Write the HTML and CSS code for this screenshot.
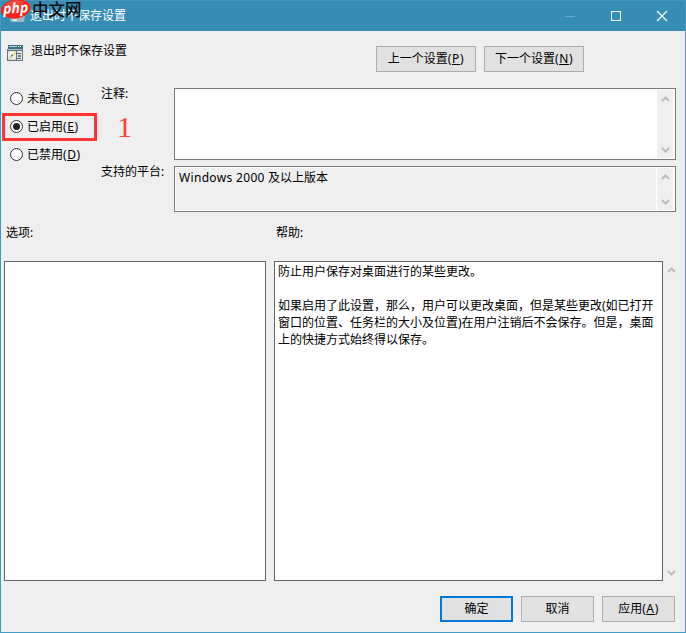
FILE: index.html
```html
<!DOCTYPE html>
<html lang="zh-CN">
<head>
<meta charset="utf-8">
<title>退出时不保存设置</title>
<link rel="stylesheet" href="styles.css">
</head>
<body>
<div class="window">
  <header class="titlebar">
    <span class="caption">退出时不保存设置</span>
    <div class="controls">
      <svg width="12" height="12" viewBox="0 0 12 12"><path d="M1 6.5h10" stroke="#64a9ca"/></svg>
      <svg width="12" height="12" viewBox="0 0 12 12"><path d="M1.5 1.5h9v9h-9z" fill="none" stroke="#fff"/></svg>
      <svg width="12" height="12" viewBox="0 0 12 12"><path d="M1 1l10 10M11 1L1 11" stroke="#fff" stroke-width="1.2"/></svg>
    </div>
    <div class="brand">
      <svg class="brand-oval" width="34" height="23" viewBox="0 0 34 23">
        <path d="M8 16l8-1 8 1-1 6H10z" fill="#9bb8c6"/>
        <path d="M11 18h5v3h-4z" fill="#dde8ec"/>
        <ellipse cx="14.6" cy="9" rx="14.8" ry="9.6" fill="#f8211b" transform="rotate(-9 14.6 9)"/>
        <ellipse cx="13.5" cy="4" rx="9.5" ry="3.5" fill="#ff6254" opacity=".55" transform="rotate(-9 13.5 4)"/>
      </svg>
      <span class="brand-php">php</span>
      <span class="brand-name">中文网</span>
    </div>
  </header>

  <section class="heading">
    <svg class="policy-icon" width="16" height="16" viewBox="0 0 16 16">
      <path d="M1 0h15v5H1z" fill="#3d7183"/><path d="M2 1h8v1H2z" fill="#b5d2d6"/><path d="M11 1h1v1h-1zM13 1h1v1h-1z" fill="#fff"/>
      <path d="M0 4h16v12H0z" fill="#66747b"/><path d="M1 4h14v1H1z" fill="#b4bec1"/><path d="M1 6h8v9H1z" fill="#d4dccb"/>
      <circle cx="5" cy="10.5" r="3.9" fill="#f5f5e5"/><path d="M5 10l3-3 .7 3z" fill="#e7d776"/><path d="M2 12l3-1-1 3z" fill="#9ccabb"/><circle cx="5" cy="10.5" r="1" fill="#576d73"/>
      <path d="M10 6h5v9h-5z" fill="#e4e6e6"/><path d="M10 8.5h4M10 13.5h4" stroke="#426f85"/><path d="M11 10h3v2h-3z" fill="#777"/>
    </svg>
    <span class="policy-name">退出时不保存设置</span>
    <div class="nav">
      <button class="btn wide">上一个设置<span class="key">(<u>P</u>)</span></button>
      <button class="btn wide">下一个设置<span class="key">(<u>N</u>)</span></button>
    </div>
  </section>

  <section class="settings">
    <div class="radios">
      <label class="radio"><i class="dot"></i>未配置<span class="key">(<u>C</u>)</span></label>
      <label class="radio marked"><i class="dot on"></i>已启用<span class="key">(<u>E</u>)</span></label>
      <label class="radio"><i class="dot"></i>已禁用<span class="key">(<u>D</u>)</span></label>
    </div>
    <div class="labels">
      <span class="comment-label">注释:</span>
      <span class="step">1</span>
      <span class="platform-label">支持的平台:</span>
    </div>
    <div class="fields">
      <div class="field comment">
        <div class="text"></div>
        <div class="scroll">
          <svg width="9" height="6" viewBox="0 0 9 6"><path d="M1 5l3.5-3.5L8 5" /></svg>
          <svg width="9" height="6" viewBox="0 0 9 6"><path d="M1 1l3.5 3.5L8 1" /></svg>
        </div>
      </div>
      <div class="field platform">
        <div class="text"><span class="latin">Windows 2000</span> 及以上版本</div>
        <div class="scroll">
          <svg width="9" height="6" viewBox="0 0 9 6"><path d="M1 5l3.5-3.5L8 5" /></svg>
          <svg width="9" height="6" viewBox="0 0 9 6"><path d="M1 1l3.5 3.5L8 1" /></svg>
        </div>
      </div>
    </div>
  </section>

  <section class="panels">
    <span class="panel-title">选项:</span>
    <span class="panel-title">帮助:</span>
    <span></span>
    <div class="panel"></div>
    <div class="panel help">
      <p>防止用户保存对桌面进行的某些更改。</p>
      <p>如果启用了此设置，那么，用户可以更改桌面，但是某些更改(如已打开<br>窗口的位置、任务栏的大小及位置)在用户注销后不会保存。但是，桌面<br>上的快捷方式始终得以保存。</p>
    </div>
    <div class="scroll outer">
      <svg width="9" height="6" viewBox="0 0 9 6"><path d="M1 5l3.5-3.5L8 5" /></svg>
      <svg width="9" height="6" viewBox="0 0 9 6"><path d="M1 1l3.5 3.5L8 1" /></svg>
    </div>
  </section>

  <footer class="actions">
    <button class="btn primary">确定</button>
    <button class="btn">取消</button>
    <button class="btn">应用<span class="key">(<u>A</u>)</span></button>
  </footer>
</div>
</body>
</html>
```
FILE: styles.css
```css
* { box-sizing: border-box; }
body {
  margin: 0;
  font: 12px/16px "Noto Sans", "Noto Sans CJK SC", sans-serif;
  color: #000;
}
.window {
  width: 686px;
  height: 633px;
  border: 1px solid #4299bd;
  border-top: 0;
  background: #efefef;
  overflow: hidden;
}
.titlebar {
  position: relative;
  display: flex;
  align-items: center;
  justify-content: space-between;
  height: 31px;
  margin: 0 -1px;
  padding: 0 18px 0 30px;
  background: #378eb5;
  border-top: 1px solid #4299bd;
  color: #fff;
}
.controls { display: flex; gap: 34px; }
.controls svg { display: block; }
.brand { position: absolute; left: 1px; top: -1px; width: 90px; height: 24px; }
.brand-oval { position: absolute; left: 0; top: 0; }
.brand-php {
  position: absolute;
  left: 2px;
  top: 0;
  font: italic bold 14px/16px "Open Sans", sans-serif;
  transform: rotate(-4deg);
}
.brand-name {
  position: absolute;
  left: 31px;
  top: 0;
  font: 500 16.5px/18px "Noto Sans CJK SC", sans-serif;
  color: #090d10;
  white-space: nowrap;
}
.heading {
  display: flex;
  height: 57px;
  padding: 14px 101px 0 6px;
}
.policy-icon { flex: none; }
.policy-name { margin: -2px 0 0 8px; }
.nav { display: flex; gap: 8px; margin: 1px 0 0 auto; }
.btn {
  display: block;
  width: 73px;
  height: 26px;
  padding: 0 0 1px;
  border: 1px solid #adadad;
  border-radius: 0;
  background: #e1e1e1;
  font: inherit;
  color: #000;
  white-space: nowrap;
}
.btn.wide { width: 100px; }
.btn.primary { border: 2px solid #0078d7; }
.key { letter-spacing: .6px; }
.latin { letter-spacing: .33px; }
u { text-underline-offset: 1px; text-decoration-skip-ink: none; }
.settings {
  display: grid;
  grid-template-columns: 99px 74px 502px;
  height: 124px;
}
.radios { display: flex; flex-direction: column; margin-top: -3px; }
.radio {
  display: flex;
  align-items: center;
  height: 28px;
  padding-left: 9px;
}
.radio.marked {
  width: 95px;
  margin-left: 1px;
  padding-left: 5px;
  border: 3px solid #fe3333;
}
.dot {
  display: flex;
  width: 13px;
  height: 13px;
  margin: 0 4px 1px 0;
  border: 1px solid #333;
  border-radius: 50%;
  background: #fff;
}
.dot.on::after {
  content: "";
  width: 7px;
  height: 7px;
  margin: 2px;
  border-radius: 50%;
  background: #222;
}
.labels { display: flex; flex-direction: column; padding-left: 1px; }
.comment-label { margin-top: -2px; }
.step {
  height: 30px;
  margin: 11px 0 21px 16px;
  font: 30px/28px "Liberation Serif", serif;
  color: #fc3e3e;
}
.fields { display: flex; flex-direction: column; gap: 6px; }
.field {
  display: flex;
  padding: 1px;
  border: 1px solid #7a7a7a;
  background: #fff;
}
.comment { height: 72px; }
.platform { height: 46px; }
.text { flex: 1; padding: 2px 3px; margin-right: 1px; }
.platform .text { background: #efefef; }
.scroll {
  display: flex;
  flex-direction: column;
  align-items: center;
  justify-content: space-between;
  width: 16px;
  margin-right: 1px;
  padding: 6px 0 5px;
  background: #efefef;
}
.scroll svg { display: block; }
.scroll path { fill: none; stroke: #bebebe; stroke-width: 2; }
.panels {
  display: grid;
  grid-template-columns: 262px 389px 17px;
  grid-template-rows: 49px 320px;
  column-gap: 8px;
  padding-left: 3px;
}
.panel-title { padding: 13px 0 0 2px; }
.panel { border: 1px solid #646464; background: #fff; }
.help { padding: 1px 3px; line-height: 17px; white-space: nowrap; }
.help p { margin: 0 0 17px; }
.scroll.outer { margin-left: -8px; width: 17px; padding-bottom: 5px; }
.actions {
  display: flex;
  justify-content: flex-end;
  gap: 8px;
  padding: 15px 10px 0 0;
}
```
